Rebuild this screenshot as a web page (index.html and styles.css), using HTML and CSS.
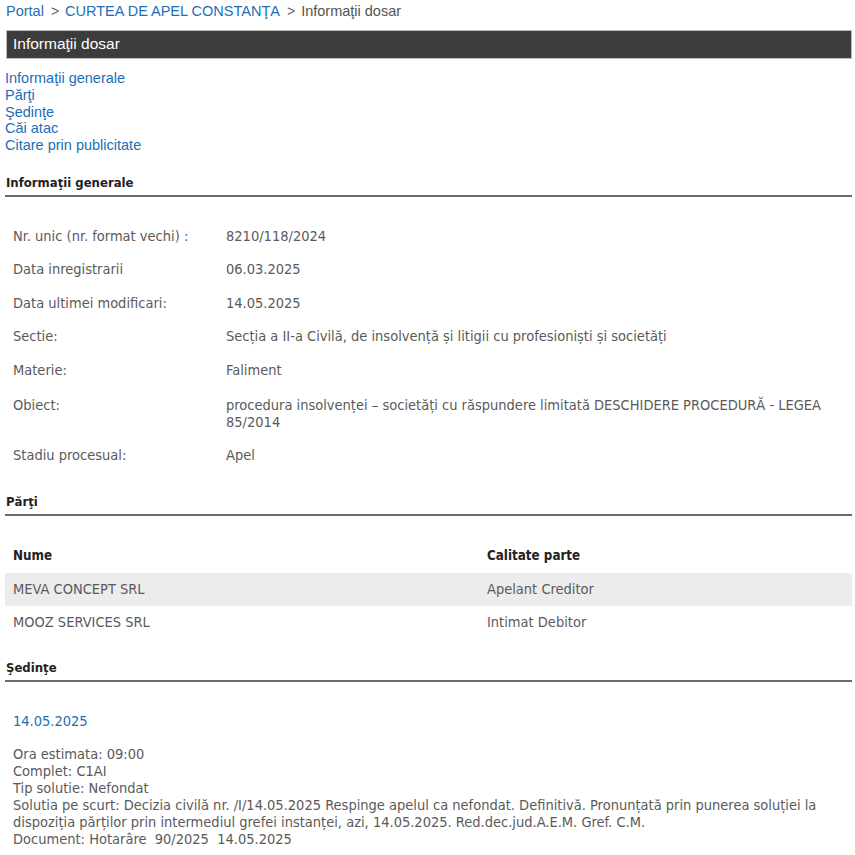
FILE: index.html
```html
<!DOCTYPE html>
<html lang="ro">
<head>
<meta charset="utf-8">
<title>Informaţii dosar</title>
<link rel="stylesheet" href="styles.css">
</head>
<body>
<div class="page">
  <div class="crumb">
    <a href="#">Portal</a><span class="sep">&gt;</span><a href="#">CURTEA DE APEL CONSTANŢA</a><span class="sep">&gt;</span><span class="cur">Informaţii dosar</span>
  </div>
  <div class="titlebar">Informaţii dosar</div>
  <nav class="nav">
    <a href="#">Informaţii generale</a>
    <a href="#">Părţi</a>
    <a href="#">Şedinţe</a>
    <a href="#">Căi atac</a>
    <a href="#">Citare prin publicitate</a>
  </nav>

  <h2 class="sec sec-gen">Informaţii generale</h2>
  <div class="info">
    <div class="lbl">Nr. unic (nr. format vechi) :</div><div class="val">8210/118/2024</div>
    <div class="lbl">Data inregistrarii</div><div class="val">06.03.2025</div>
    <div class="lbl">Data ultimei modificari:</div><div class="val">14.05.2025</div>
    <div class="lbl">Sectie:</div><div class="val">Secția a II-a Civilă, de insolvență și litigii cu profesioniști și societăți</div>
    <div class="lbl">Materie:</div><div class="val">Faliment</div>
    <div class="lbl obiect">Obiect:</div><div class="val obiect">procedura insolvenței – societăți cu răspundere limitată DESCHIDERE PROCEDURĂ - LEGEA 85/2014</div>
    <div class="lbl">Stadiu procesual:</div><div class="val">Apel</div>
  </div>

  <h2 class="sec sec-parti">Părţi</h2>
  <div class="parti">
    <div class="prow phead"><div class="c1">Nume</div><div class="c2">Calitate parte</div></div>
    <div class="prow alt"><div class="c1">MEVA CONCEPT SRL</div><div class="c2">Apelant Creditor</div></div>
    <div class="prow"><div class="c1">MOOZ SERVICES SRL</div><div class="c2">Intimat Debitor</div></div>
  </div>

  <h2 class="sec sec-sed">Şedinţe</h2>
  <div class="sedinta">
    <div class="sdate">14.05.2025</div>
    <div class="sdet">
      Ora estimata: 09:00<br>
      Complet: C1AI<br>
      Tip solutie: Nefondat<br>
      Solutia pe scurt: Decizia civilă nr. /I/14.05.2025 Respinge apelul ca nefondat. Definitivă. Pronunțată prin punerea soluției la dispoziția părților prin intermediul grefei instanței, azi, 14.05.2025. Red.dec.jud.A.E.M. Gref. C.M.<br>
      Document: Hotarâre&nbsp; 90/2025&nbsp; 14.05.2025
    </div>
  </div>
</div>
</body>
</html>
```

FILE: styles.css
```css
html, body {
  margin: 0;
  padding: 0;
  background: #ffffff;
}
.page {
  width: 847px;
  margin-left: 5px;
  font-family: "DejaVu Sans Condensed", "DejaVu Sans", sans-serif;
  color: #5a5a5a;
}
a {
  color: #1b6fb8;
  text-decoration: none;
}
.crumb {
  font-family: "Liberation Sans", Arial, sans-serif;
  font-size: 14.5px;
  line-height: 18px;
  padding: 2px 0 0 1px;
  height: 30px;
  box-sizing: border-box;
}
.crumb .sep {
  color: #666666;
  margin: 0 6px 0 7px;
  font-size: 14px;
}
.crumb .cur {
  color: #555555;
}
.titlebar {
  margin-left: 1px;
  height: 29px;
  box-sizing: border-box;
  background: #3c3c3c;
  border: 1px solid #bdbdbd;
  color: #ffffff;
  font-family: "Liberation Sans", Arial, sans-serif;
  font-size: 15.5px;
  line-height: 26px;
  padding-left: 6px;
}
.nav {
  display: flex;
  flex-direction: column;
  align-items: flex-start;
  padding-top: 11px;
  font-family: "Liberation Sans", Arial, sans-serif;
  font-size: 14.5px;
  line-height: 16.75px;
}
.sec {
  margin: 0;
  font-size: 13px;
  font-weight: bold;
  color: #222222;
  line-height: 18px;
  padding-left: 1px;
  padding-bottom: 3px;
  border-bottom: 2px solid #6a6a6a;
}
.sec-gen {
  margin-top: 20px;
}
.info {
  display: grid;
  grid-template-columns: 213px 1fr;
  padding: 23px 0 0 8px;
  font-size: 14.5px;
  line-height: 17px;
}
.info .lbl,
.info .val {
  padding: 8px 0 8.5px;
}
.info .obiect {
  padding-top: 9.5px;
}
.info .val {
  padding-right: 20px;
}
.sec-parti {
  margin-top: 20px;
}
.parti {
  padding-top: 22px;
  font-size: 14.5px;
  line-height: 17px;
}
.prow {
  display: flex;
  align-items: center;
  height: 33px;
  padding-left: 8px;
}
.prow .c1 {
  width: 474px;
}
.phead {
  font-weight: bold;
  font-size: 13.3px;
  color: #222222;
  height: 35px;
}
.alt {
  background: #ececec;
}
.sec-sed {
  margin-top: 20px;
}
.sedinta {
  padding: 31px 0 0 8px;
  font-size: 14.5px;
  line-height: 17px;
}
.sdate {
  color: #1b6fb8;
  font-size: 14.5px;
  margin-bottom: 16px;
}
.sdet {
  padding-right: 20px;
}
```
